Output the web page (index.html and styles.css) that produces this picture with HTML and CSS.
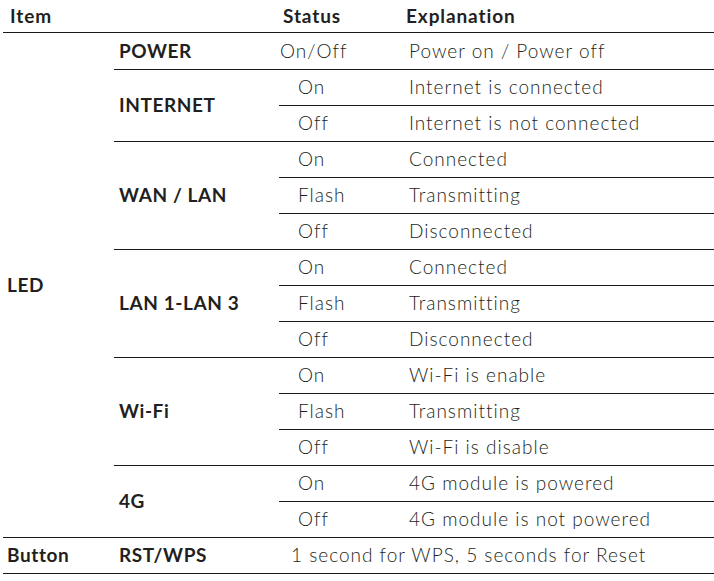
FILE: index.html
```html
<!DOCTYPE html>
<html>
<head>
<meta charset="utf-8">
<link rel="stylesheet" href="styles.css">
</head>
<body>
<table class="spec">
  <colgroup>
    <col class="c1"><col class="c2"><col class="c3"><col class="c4">
  </colgroup>
  <thead>
    <tr class="head">
      <th class="item-h">Item</th>
      <th></th>
      <th class="status-h">Status</th>
      <th class="expl-h">Explanation</th>
    </tr>
  </thead>
  <tbody>
    <tr class="first">
      <td class="item lab" rowspan="14">LED</td>
      <td class="name lab">POWER</td>
      <td class="st onoff">On/Off</td>
      <td class="ex">Power on / Power off</td>
    </tr>
    <tr><td class="name lab" rowspan="2">INTERNET</td><td class="st">On</td><td class="ex">Internet is connected</td></tr>
    <tr><td class="st">Off</td><td class="ex">Internet is not connected</td></tr>
    <tr><td class="name lab" rowspan="3">WAN / LAN</td><td class="st">On</td><td class="ex">Connected</td></tr>
    <tr><td class="st">Flash</td><td class="ex">Transmitting</td></tr>
    <tr><td class="st">Off</td><td class="ex">Disconnected</td></tr>
    <tr><td class="name lab" rowspan="3">LAN 1-LAN 3</td><td class="st">On</td><td class="ex">Connected</td></tr>
    <tr><td class="st">Flash</td><td class="ex">Transmitting</td></tr>
    <tr><td class="st">Off</td><td class="ex">Disconnected</td></tr>
    <tr><td class="name lab" rowspan="3">Wi-Fi</td><td class="st">On</td><td class="ex">Wi-Fi is enable</td></tr>
    <tr><td class="st">Flash</td><td class="ex">Transmitting</td></tr>
    <tr><td class="st">Off</td><td class="ex">Wi-Fi is disable</td></tr>
    <tr><td class="name lab" rowspan="2">4G</td><td class="st">On</td><td class="ex">4G module is powered</td></tr>
    <tr><td class="st">Off</td><td class="ex">4G module is not powered</td></tr>
    <tr>
      <td class="item lab">Button</td>
      <td class="name lab">RST/WPS</td>
      <td class="btn" colspan="2">1 second for WPS, 5 seconds for Reset</td>
    </tr>
  </tbody>
</table>
</body>
</html>
```

FILE: styles.css
```css
html, body {
  margin: 0;
  padding: 0;
  background: #ffffff;
}

.spec {
  margin-left: 3px;
  width: 711px;
  border-collapse: collapse;
  table-layout: fixed;
  font-family: "Lato", "Liberation Sans", sans-serif;
  color: #231f20;
  font-size: 19px;
}

.c1 { width: 111px; }
.c2 { width: 165px; }
.c3 { width: 119px; }
.c4 { width: 316px; }

.spec th,
.spec td {
  padding: 0 0 2px 0;
  border-bottom: 1px solid #1a1a1a;
  vertical-align: middle;
  text-align: left;
  white-space: nowrap;
  height: 33px;
}

.spec th {
  font-weight: 700;
  height: 30px;
  letter-spacing: 0.9px;
}

.spec .first td { height: 34px; }

.lab {
  font-weight: 700;
  letter-spacing: 0.6px;
}

.item-h { padding-left: 7px !important; }
.item { padding-left: 4px !important; }
.name { padding-left: 5px !important; }

.status-h { padding-left: 4px !important; }
.expl-h { padding-left: 8px !important; }

.st,
.ex,
.btn {
  font-weight: 300;
  letter-spacing: 1px;
}

.st { padding-left: 19px !important; }
.st.onoff { padding-left: 1px !important; }

.ex { padding-left: 11px !important; }

.btn { padding-left: 12px !important; }
```
